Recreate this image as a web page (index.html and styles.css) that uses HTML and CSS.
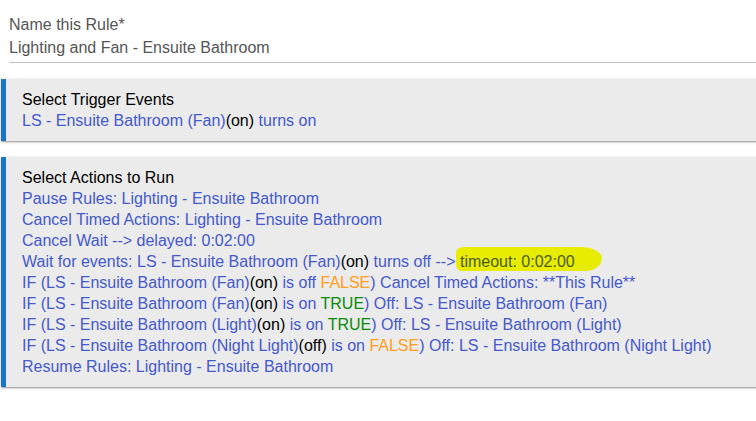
FILE: index.html
```html
<!DOCTYPE html>
<html>
<head>
<meta charset="utf-8">
<link rel="stylesheet" href="styles.css">
</head>
<body>
<div class="page">
  <div class="field">
    <div class="label">Name this Rule*</div>
    <div class="value">Lighting and Fan - Ensuite Bathroom</div>
  </div>
  <div class="card card-trigger">
    <div class="title">Select Trigger Events</div>
    <div class="line">LS - Ensuite Bathroom (Fan)<span class="k">(on)</span> turns on</div>
  </div>
  <div class="card card-actions">
    <div class="title">Select Actions to Run</div>
    <div class="line">Pause Rules: Lighting - Ensuite Bathroom</div>
    <div class="line">Cancel Timed Actions: Lighting - Ensuite Bathroom</div>
    <div class="line">Cancel Wait --&gt; delayed: 0:02:00</div>
    <div class="line">Wait for events: LS - Ensuite Bathroom (Fan)<span class="k">(on)</span> turns off --&gt; <span class="hl">timeout: 0:02:00</span></div>
    <div class="line">IF (LS - Ensuite Bathroom (Fan)<span class="k">(on)</span> is off <span class="f">FALSE</span>) Cancel Timed Actions: **This Rule**</div>
    <div class="line">IF (LS - Ensuite Bathroom (Fan)<span class="k">(on)</span> is on <span class="t">TRUE</span>) Off: LS - Ensuite Bathroom (Fan)</div>
    <div class="line">IF (LS - Ensuite Bathroom (Light)<span class="k">(on)</span> is on <span class="t">TRUE</span>) Off: LS - Ensuite Bathroom (Light)</div>
    <div class="line">IF (LS - Ensuite Bathroom (Night Light)<span class="k">(off)</span> is on <span class="f">FALSE</span>) Off: LS - Ensuite Bathroom (Night Light)</div>
    <div class="line">Resume Rules: Lighting - Ensuite Bathroom</div>
  </div>
</div>
</body>
</html>
```

FILE: styles.css
```css
html, body {
  margin: 0;
  padding: 0;
  background: #fff;
  overflow: hidden;
}
body {
  font-family: "Liberation Sans", Arial, sans-serif;
  font-size: 16px;
  width: 756px;
  height: 421px;
}
.page {
  width: 780px;
  padding-top: 15px;
}
.field {
  margin-left: 9px;
  border-bottom: 1px solid #bdbdbd;
  padding-bottom: 4px;
}
.label {
  color: #555;
  line-height: 20px;
  margin-bottom: 3px;
}
.value {
  color: #555;
  line-height: 20px;
}
.card {
  margin-left: 1px;
  margin-top: 16px;
  background: #ebebeb;
  border-left: 5px solid #1b74c9;
  padding: 10px 0 10px 16px;
  line-height: 21px;
  color: #4459cc;
  box-shadow: 0 1px 3px rgba(0,0,0,0.25), 0 2px 1px -1px rgba(0,0,0,0.2);
}
.title {
  color: #000;
}
.line {
  white-space: nowrap;
}
.k {
  color: #000;
}
.f {
  color: #ff9d1c;
}
.t {
  color: #0a8a0a;
}
.hl {
  position: relative;
  z-index: 0;
  color: #4d5c14;
}
.hl::before {
  content: "";
  position: absolute;
  z-index: -1;
  left: -4px;
  right: -27px;
  top: -6px;
  bottom: -1px;
  background: #e8ec00;
  border-radius: 8px 24px 18px 5px / 6px 12px 14px 8px;
}
```
